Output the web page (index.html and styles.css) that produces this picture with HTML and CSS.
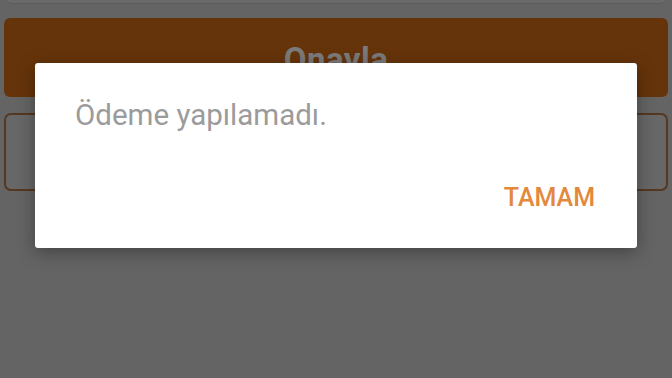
FILE: index.html
```html
<!DOCTYPE html>
<html lang="tr">
<head>
<meta charset="utf-8">
<link rel="stylesheet" href="styles.css">
</head>
<body>
<div class="page">
  <div class="input"></div>
  <div class="btn-primary"><span>Onayla</span></div>
  <div class="btn-outline"></div>
</div>
<div class="overlay">
  <div class="dialog">
    <p class="message">Ödeme yapılamadı.</p>
    <div class="actions"><span class="ok">TAMAM</span></div>
  </div>
</div>
</body>
</html>
```
FILE: styles.css
```css
html, body {
  margin: 0;
  padding: 0;
  width: 672px;
  height: 378px;
  overflow: hidden;
  background: #646464;
  font-family: Roboto, "Liberation Sans", sans-serif;
}
.page {
  display: flex;
  flex-direction: column;
  padding: 0 4px;
  gap: 14px;
}
.input {
  height: 40px;
  margin-top: -36px;
  border: 1px solid #5c5c5c;
  border-radius: 8px;
  background: #6a6a6a;
  box-sizing: border-box;
}
.btn-primary {
  height: 79px;
  background: #66340a;
  border-radius: 6px;
  display: flex;
  align-items: center;
  justify-content: center;
}
.btn-primary span {
  color: #7b7b7b;
  font-size: 33px;
  font-weight: 700;
  letter-spacing: 0.5px;
  margin-top: 4px;
}
.btn-outline {
  height: 78px;
  margin-top: 2px;
  border: 2px solid #553822;
  border-radius: 7px;
  background: #676767;
  box-sizing: border-box;
}
.overlay {
  position: absolute;
  left: 0;
  top: 0;
  width: 672px;
  height: 378px;
  display: flex;
  justify-content: center;
  align-items: flex-start;
}
.dialog {
  margin-top: 63px;
  width: 602px;
  height: 185px;
  background: #ffffff;
  border-radius: 3px;
  box-shadow: 0 4px 18px rgba(0, 0, 0, 0.35);
  box-sizing: border-box;
  padding: 34px 42px 0 40px;
  display: flex;
  flex-direction: column;
}
.message {
  margin: 0;
  font-size: 29.5px;
  line-height: 36px;
  color: #9b9b9b;
}
.actions {
  display: flex;
  justify-content: flex-end;
  margin-top: 48px;
}
.ok {
  color: #e4883b;
  font-size: 25px;
  font-weight: 500;
  line-height: 34px;
}
```
